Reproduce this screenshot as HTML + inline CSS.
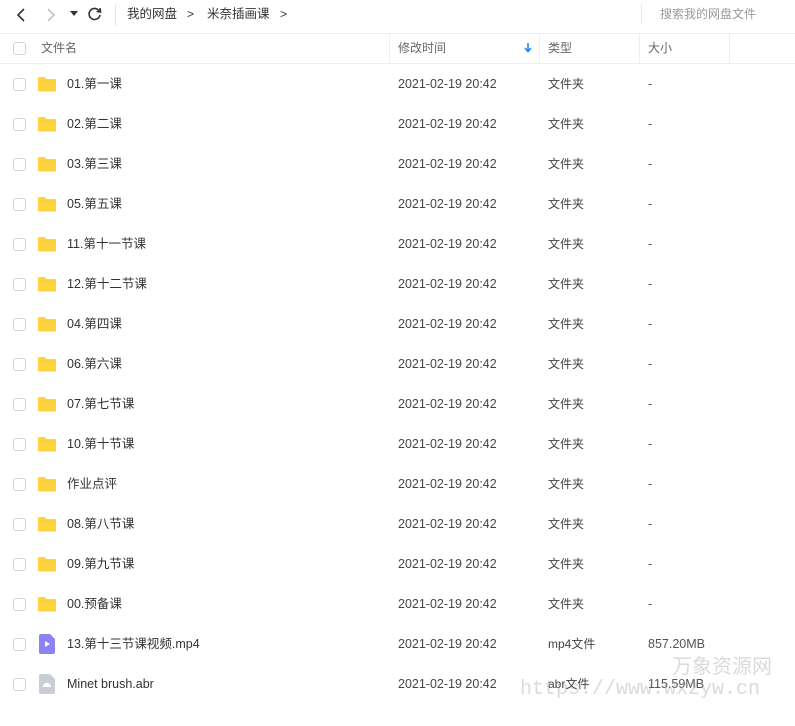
<!DOCTYPE html>
<html><head><meta charset="utf-8"><style>
*{margin:0;padding:0;box-sizing:border-box}
body{width:795px;height:726px;background:#fff;font-family:"Liberation Sans","Noto Sans CJK SC",sans-serif;font-size:12px;color:#333;position:relative;overflow:hidden}
.a{position:absolute;white-space:nowrap;line-height:14px}
.cb{position:absolute;left:13px;width:13px;height:13px;border:1px solid #d4d4d4;border-radius:3px;background:#fff}
.fd{position:absolute;left:37px;width:20px;height:16px}
.row{position:absolute;left:0;width:795px;height:40px}
.row .n{left:67px;top:13px;font-size:12.5px}
.row .t{left:398px;top:13px;color:#444;font-size:12.5px}
.row .y{left:548px;top:13px;color:#444}
.row .s{left:648px;top:13px;color:#555;font-size:12.5px}
.hd{color:#666}
</style></head><body>
<svg class="a" style="left:14px;top:7px" width="16" height="16"><path d="M10 2 L4 8 L10 14" fill="none" stroke="#333" stroke-width="1.6"/></svg>
<svg class="a" style="left:43px;top:7px" width="16" height="16"><path d="M5 2 L11 8 L5 14" fill="none" stroke="#bbb" stroke-width="1.4"/></svg>
<svg class="a" style="left:70px;top:11px" width="8" height="6"><path d="M0 0 L8 0 L4 5 Z" fill="#333"/></svg>
<svg class="a" style="left:87px;top:6px" width="16" height="16"><path d="M12.5 5.5 A5.5 5.5 0 1 0 13 9" fill="none" stroke="#333" stroke-width="1.6"/><path d="M9.5 5.5 L13.5 6 L13 2" fill="none" stroke="#333" stroke-width="1.6"/></svg>
<div class="a" style="left:115px;top:4px;width:1px;height:22px;background:#e5e5e5"></div>
<div class="a" style="left:127px;top:7px;font-size:12.5px">我的网盘</div>
<div class="a" style="left:187px;top:7px">&gt;</div>
<div class="a" style="left:207px;top:7px;font-size:12.5px">米奈插画课</div>
<div class="a" style="left:280px;top:7px">&gt;</div>
<div class="a" style="left:641px;top:4px;width:1px;height:20px;background:#e8e8e8"></div>
<div class="a" style="left:660px;top:7px;color:#999">搜索我的网盘文件</div>
<div class="a" style="left:0;top:33px;width:795px;height:1px;background:#eee"></div>
<div class="a" style="left:0;top:63px;width:795px;height:1px;background:#f0f0f0"></div>
<div class="cb" style="top:42px"></div>
<div class="a hd" style="left:41px;top:41px">文件名</div>
<div class="a" style="left:389px;top:34px;width:1px;height:29px;background:#eee"></div>
<div class="a hd" style="left:398px;top:41px">修改时间</div>
<svg class="a" style="left:524px;top:43px" width="8" height="10"><path d="M4 0 V8 M1 5 L4 8.5 L7 5" fill="none" stroke="#1a8cff" stroke-width="1.6"/></svg>
<div class="a" style="left:539px;top:34px;width:1px;height:29px;background:#eee"></div>
<div class="a hd" style="left:548px;top:41px">类型</div>
<div class="a" style="left:639px;top:34px;width:1px;height:29px;background:#eee"></div>
<div class="a hd" style="left:648px;top:41px">大小</div>
<div class="a" style="left:729px;top:34px;width:1px;height:29px;background:#eee"></div>

<div id="rows"></div>
<script>
var names=["01.第一课","02.第二课","03.第三课","05.第五课","11.第十一节课","12.第十二节课","04.第四课","06.第六课","07.第七节课","10.第十节课","作业点评","08.第八节课","09.第九节课","00.预备课"];
var h="";
var fold='<svg class="fd" style="top:12px" viewBox="0 0 20 16"><path d="M1 2.5 Q1 1 2.5 1 H7.5 L9.5 3 H17.5 Q19 3 19 4.5 V14 Q19 15.5 17.5 15.5 H2.5 Q1 15.5 1 14 Z" fill="#ffd23f"/><path d="M1 5 H19" stroke="#f7c52c" stroke-width="0.6"/></svg>';
names.forEach(function(n,i){
h+='<div class="row" style="top:'+(64+i*40)+'px"><div class="cb" style="top:14px"></div>'+fold+'<div class="a n">'+n+'</div><div class="a t">2021-02-19 20:42</div><div class="a y">文件夹</div><div class="a s">-</div></div>';
});
h+='<div class="row" style="top:624px"><div class="cb" style="top:14px"></div><svg class="a" style="left:39px;top:10px" width="16" height="20"><path d="M2 0 H11 L16 5 V18 Q16 20 14 20 H2 Q0 20 0 18 V2 Q0 0 2 0Z" fill="#8b82f5"/><path d="M6 7 L11 10 L6 13Z" fill="#fff"/></svg><div class="a n">13.第十三节课视频.mp4</div><div class="a t">2021-02-19 20:42</div><div class="a y">mp4文件</div><div class="a s">857.20MB</div></div>';
h+='<div class="row" style="top:664px"><div class="cb" style="top:14px"></div><svg class="a" style="left:39px;top:10px" width="16" height="20"><path d="M2 0 H11 L16 5 V18 Q16 20 14 20 H2 Q0 20 0 18 V2 Q0 0 2 0Z" fill="#c9cdd6"/><path d="M4 13 Q4 9 8 9 Q12 9 12 13Z" fill="#fff"/></svg><div class="a n">Minet brush.abr</div><div class="a t">2021-02-19 20:42</div><div class="a y">abr文件</div><div class="a s">115.59MB</div></div>';
document.getElementById("rows").innerHTML=h;
</script>
<div class="a" style="left:672px;top:655px;font-size:20px;line-height:24px;color:rgba(150,150,150,0.35)">万象资源网</div>
<div class="a" style="left:520px;top:678px;font-size:20px;line-height:24px;font-family:'Liberation Mono',monospace;color:rgba(150,150,150,0.35)">https://www.wxzyw.cn</div>
</body></html>
